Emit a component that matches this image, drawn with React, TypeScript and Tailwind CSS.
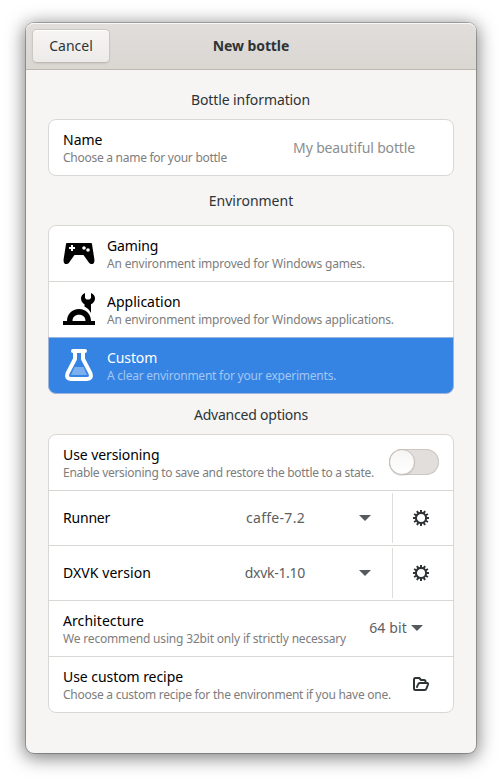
import React from "react";

const GamepadIcon = () => (
  <svg width="32" height="32" viewBox="0 0 32 32" className="mb-px shrink-0">
    <path
      fill="currentColor"
      fillRule="evenodd"
      d="M4 6H28Q28.9 6 29 7L31.4 22.5Q31.8 27 28.4 27Q27 27 26.2 26L20.5 18H11.5L5.8 26Q5 27 3.6 27Q.2 27 .6 22.5L3 7Q3.1 6 4 6ZM8 8V10H6V12H8V14H10V12H12V10H10V8ZM21 9.2A1.8 1.8 0 1 0 21 12.8A1.8 1.8 0 1 0 21 9.2ZM25 11.2A1.8 1.8 0 1 0 25 14.8A1.8 1.8 0 1 0 25 11.2Z"
    />
  </svg>
);

const ToolsIcon = () => (
  <svg width="32" height="32" viewBox="0 0 32 32" className="mb-px shrink-0" fill="currentColor">
    <path d="M22 0C19.4.9 18 3 18 5.5C18 8 19.3 10 21.5 11.3V13.5C24.2 14.8 26.5 17 28 20V11.3C30.7 10 32 8 32 5.5C32 3 30.6.9 28 0V5L26.5 6.5H23.5L22 5Z" />
    <path d="M0 28H4C4 21 9 16 16 16S28 21 28 28H32V32H0ZM9.5 28H22.5C22.5 24 20 21.7 16 21.7S9.5 24 9.5 28Z" fillRule="evenodd" />
  </svg>
);

const FlaskIcon = () => (
  <svg width="32" height="32" viewBox="0 0 32 32" className="mb-px shrink-0">
    <path d="M10 2H22" stroke="currentColor" strokeWidth="4" strokeLinecap="round" />
    <path
      d="M12 3V10L4.6 24.2Q2.6 30 8 30H24Q29.4 30 27.4 24.2L20 10V3"
      fill="none"
      stroke="currentColor"
      strokeWidth="4"
      strokeLinejoin="round"
    />
    <path d="M11.5 18H20.5L24 26H8Z" fill="currentColor" opacity="0.35" />
  </svg>
);

const GearIcon = () => (
  <svg width="16" height="16" viewBox="0 0 16 16" fill="none" stroke="#2e3436">
    <circle cx="8" cy="8" r="5.1" strokeWidth="2.1" />
    <path
      strokeWidth="2"
      d="M8 0V3M8 13V16M0 8H3M13 8H16M4 1.07L5.5 3.67M10.5 12.33L12 14.93M1.07 4L3.67 5.5M12.33 10.5L14.93 12M1.07 12L3.67 10.5M12.33 5.5L14.93 4M4 14.93L5.5 12.33M10.5 3.67L12 1.07"
    />
  </svg>
);

const FolderIcon = () => (
  <svg width="16" height="16" viewBox="0 0 16 16" fill="none" stroke="#2e3436" strokeWidth="2" strokeLinejoin="round" strokeLinecap="round" className="mb-px">
    <path d="M12.5 6V5.5Q12.5 4 11 4H8L6.3 2H2.5Q1 2 1 3.5V12.5Q1 14 2.5 14H11.5Q13 14 13.5 12.5L15 8.5Q15.3 7 14 7H7Q5.5 7 5 8.5L4 11" />
  </svg>
);

const Arrow = () => (
  <svg width="12" height="6" viewBox="0 0 12 6" className="shrink-0">
    <path d="M0 0H12L6 6Z" fill="#555b5d" />
  </svg>
);

function Labels({ title, sub, subTrack, track = "", selected = false }: {
  title: string; sub?: string; subTrack?: string; track?: string; selected?: boolean;
}) {
  return (
    <div className="whitespace-nowrap">
      <div className={`text-[14px] leading-[19px] ${track} ${selected ? "text-white" : "text-black"}`}>{title}</div>
      {sub && (
        <div className={`-mb-px pt-px text-[12px] leading-4 ${subTrack} ${selected ? "text-[#a3c6f3]" : "text-[#7d7d7d]"}`}>{sub}</div>
      )}
    </div>
  );
}

const Heading = ({ children, className }: { children: string; className: string }) => (
  <h2 className={`text-center text-[14px] leading-5 text-[#2e3436] ${className}`}>{children}</h2>
);

const card = "rounded-[8px] border border-[#d9d7d4] bg-white";
const line = "border-b border-[#d9d7d4]";

function VersionRow({ title, value, track, titleTrack }: { title: string; value: string; track: string; titleTrack: string }) {
  return (
    <div className={`flex h-[55px] items-center pl-[14px] ${line}`}>
      <div className="pb-0.5">
        <Labels title={title} track={titleTrack} />
      </div>
      <div className={`ml-auto pb-0.5 text-[14px] leading-[19px] text-[#5b6062] ${track}`}>{value}</div>
      <div className="ml-[54px] flex">
        <Arrow />
      </div>
      <div className="ml-[21px] h-[50px] w-px bg-[#dfddda]" />
      <div className="flex w-[60px] justify-center pr-1">
        <GearIcon />
      </div>
    </div>
  );
}

export default function App() {
  return (
    <div className="h-[782px] w-[502px] overflow-hidden bg-white pl-[26px] pt-[23px] font-['Noto_Sans',sans-serif]">
      <div className="h-[730px] w-[450px] rounded-[8px] bg-[#f6f5f4] shadow-[0_0_0_1px_rgba(0,0,0,0.23),0_3px_18px_2px_rgba(0,0,0,0.5)]">
        <header className="grid h-[47px] grid-cols-[1fr_auto_1fr] items-center rounded-t-[8px] border-b border-[#bfb8b1] bg-linear-to-b from-[#e1dedb] to-[#dad6d2] px-1.5 shadow-[inset_0_1px_#f9f8f7]">
          <button className="h-[34px] w-[78px] rounded-[5px] border border-[#cdc7c2] border-b-[#bfb8b1] bg-linear-to-b from-[#f6f5f4] to-[#edebe9] text-[14px] leading-5 text-[#2e3436] shadow-[inset_0_1px_#fff,0_1px_2px_rgba(0,0,0,0.07)]">
            Cancel
          </button>
          <h1 className="text-[14px] leading-5 font-bold tracking-[-0.1px] text-[#2e3436]">New bottle</h1>
        </header>

        <main className="px-[22px] pt-5">
          <Heading className="pr-px tracking-[-0.1px]">Bottle information</Heading>
          <section className={`mt-[9px] ${card}`}>
            <div className="flex h-[55px] items-center pl-[14px] pr-[38px]">
              <Labels title="Name" sub="Choose a name for your bottle" subTrack="tracking-[-0.27px]" />
              <div className="ml-auto text-[14px] leading-[19px] tracking-[-0.14px] text-[#8b8e8f]">My beautiful bottle</div>
            </div>
          </section>

          <Heading className="mt-[15px]">Environment</Heading>
          <section className={`mt-[14px] ${card}`}>
            <div className={`flex h-[56px] items-center gap-3 px-[14px] ${line}`}>
              <GamepadIcon />
              <Labels title="Gaming" track="tracking-[-0.15px]" sub="An environment improved for Windows games." subTrack="tracking-[-0.18px]" />
            </div>
            <div className="flex h-[55px] items-center gap-3 px-[14px]">
              <ToolsIcon />
              <Labels title="Application" sub="An environment improved for Windows applications." subTrack="tracking-[-0.18px]" />
            </div>
            <div className="-mx-px -mb-px flex h-[57px] items-center gap-3 rounded-b-[8px] border border-[#9cb5d8] bg-[#3584e4] px-[14px] text-white">
              <FlaskIcon />
              <Labels selected title="Custom" track="tracking-[-0.1px]" sub="A clear environment for your experiments." subTrack="tracking-[-0.24px]" />
            </div>
          </section>

          <Heading className="mt-[11px] tracking-[-0.22px]">Advanced options</Heading>
          <section className={`mt-[9px] ${card}`}>
            <div className={`flex h-[56px] items-center justify-between pl-[14px] pr-[14px] ${line}`}>
              <Labels title="Use versioning" track="tracking-[-0.08px]" sub="Enable versioning to save and restore the bottle to a state." subTrack="tracking-[-0.29px]" />
              <div className="mb-px flex h-[26px] w-[50px] shrink-0 rounded-full bg-[#e1dedb] shadow-[inset_0_0_0_1px_#cdc7c2]">
                <div className="size-[26px] rounded-full border border-[#c6bfb8] bg-linear-to-b from-[#f6f5f4] to-white shadow-[0_1px_1px_rgba(0,0,0,0.1)]" />
              </div>
            </div>
            <VersionRow title="Runner" titleTrack="tracking-[-0.2px]" value="caffe-7.2" track="tracking-[0.29px]" />
            <VersionRow title="DXVK version" titleTrack="tracking-[0.07px]" value="dxvk-1.10" track="tracking-[-0.3px]" />
            <div className={`flex h-[56px] items-center justify-between pl-[14px] pr-[30px] ${line}`}>
              <Labels title="Architecture" track="tracking-[0.07px]" sub="We recommend using 32bit only if strictly necessary" subTrack="tracking-[-0.18px]" />
              <div className="flex items-center gap-1 pb-0.5 text-[14px] leading-[19px] tracking-[0.15px] text-[#5b6062]">
                64 bit
                <Arrow />
              </div>
            </div>
            <div className="flex h-[55px] items-center justify-between pl-[14px] pr-6">
              <Labels title="Use custom recipe" track="tracking-[-0.06px]" sub="Choose a custom recipe for the environment if you have one." subTrack="tracking-[-0.26px]" />
              <FolderIcon />
            </div>
          </section>
        </main>
      </div>
    </div>
  );
}
